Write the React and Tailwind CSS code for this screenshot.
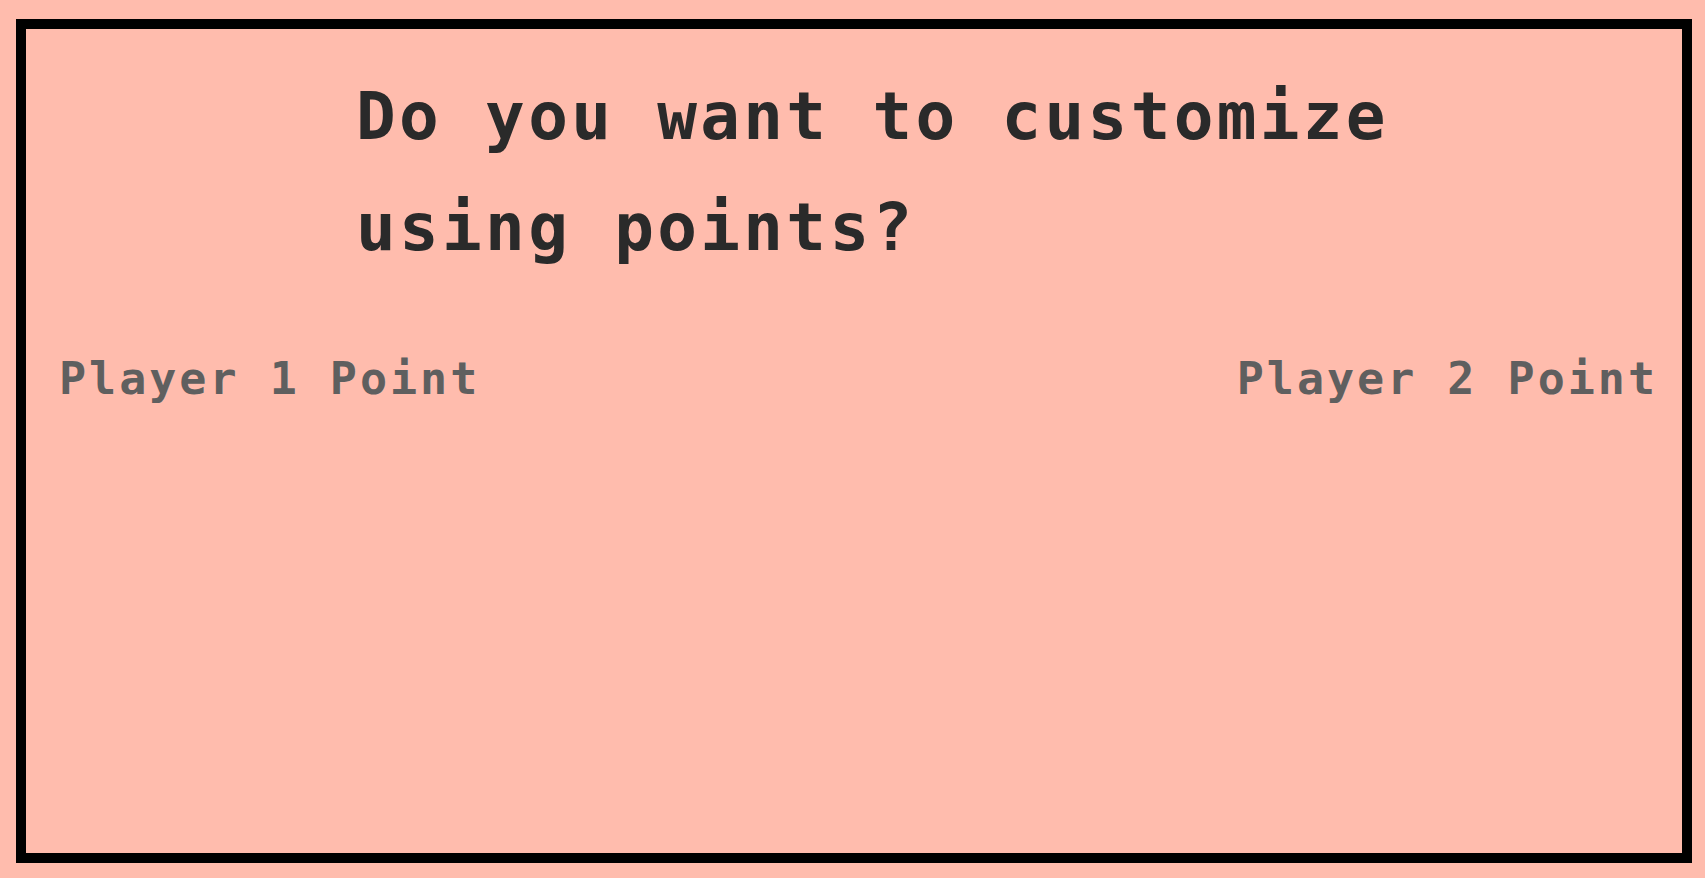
export default function App() {
  return (
    <div className="w-[1705px] h-[878px] bg-[#ffbcad] pt-[19px] pl-4">
      <div
        className="w-[1676px] h-[844px] border-[10px] border-black"
        style={{ fontFamily: '"DejaVu Sans Mono", "Liberation Mono", monospace' }}
      >
        {/* question */}
        <h1 className="pt-8 pl-[330px] text-[66px] leading-[111px] font-bold tracking-[3.3px] text-[#2a2a2a]">
          Do you want to customize
          <br />
          using points?
        </h1>

        {/* players */}
        <div className="mt-[73px] flex justify-between pl-[33px] pr-[24px] text-[45px] leading-[45px] font-bold tracking-[3px] text-[#5f5f5f]">
          <span>Player 1 Point</span>
          <span>Player 2 Point</span>
        </div>
      </div>
    </div>
  );
}
